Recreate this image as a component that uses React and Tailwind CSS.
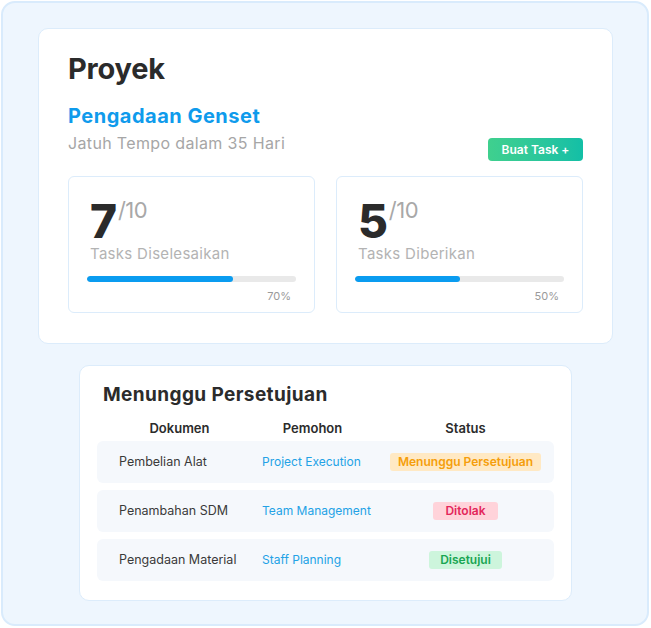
import React from "react"

const stats = [
  { value: 7, total: 10, label: "Tasks Diselesaikan", pct: 70 },
  { value: 5, total: 10, label: "Tasks Diberikan", pct: 50 },
]

const approvals = [
  { doc: "Pembelian Alat", by: "Project Execution", status: "Menunggu Persetujuan", tone: "bg-[#ffe9c4] text-[#f59e0b] px-[8px]" },
  { doc: "Penambahan SDM", by: "Team Management", status: "Ditolak", tone: "bg-[#ffd3da] text-[#e3265a] px-[12px]" },
  { doc: "Pengadaan Material", by: "Staff Planning", status: "Disetujui", tone: "bg-[#cdf5dc] text-[#19a552] px-[11px]" },
]

function StatCard({ value, total, label, pct }) {
  return (
    <div className="flex-1 h-[137px] rounded-md border border-[#dcecfb] bg-white px-[18px] pt-[22px]">
      <div className="flex items-start pl-[3px]">
        <span className="text-[46px] leading-[44px] font-extrabold text-[#2b2b2b] tracking-tight">{value}</span>
        <span className="text-[22px] leading-[22px] text-[#a8a8a8] ml-[2px] tracking-tight">/{total}</span>
      </div>
      <div className="mt-[1px] pl-[3px] text-[15px] leading-[20px] tracking-[0.3px] text-[#b3b3b3]">{label}</div>
      <div className="mt-[12px] h-[6px] w-full rounded-full bg-[#e9e9e9] overflow-hidden">
        <div className="h-full rounded-full bg-[#0a9cf0]" style={{ width: `${pct}%` }} />
      </div>
      <div className="mt-[7px] pr-[5px] text-right text-[11px] leading-[14px] text-[#9a9a9a]">{pct}%</div>
    </div>
  )
}

export default function App() {
  return (
    <div className="w-[651px] h-[628px] bg-white p-[1px] font-['Inter',sans-serif]">
      <div className="w-[648px] h-[625px] rounded-[14px] border-2 border-[#d9ebfc] bg-[#eef6fe] pt-[25px] pl-[35px] pr-[34px]">
        <div className="rounded-[10px] border border-[#dcecfb] bg-white h-[316px] px-[29px] pt-[23px]">
          <h1 className="text-[29px] leading-[34px] font-bold text-[#2b2b2b] tracking-[-0.2px]">Proyek</h1>
          <div className="mt-[18px] text-[20px] leading-[24px] font-bold tracking-[0.5px] text-[#0f9bec]">Pengadaan Genset</div>
          <div className="flex items-start justify-between">
            <div className="mt-[5px] text-[16px] leading-[20px] tracking-[0.35px] text-[#a6a6a6]">Jatuh Tempo dalam 35 Hari</div>
            <button className="mt-[10px] h-[23px] w-[95px] rounded-[4px] bg-gradient-to-r from-[#3fd08e] to-[#12bfa6] text-[12px] font-semibold text-white">
              Buat Task +
            </button>
          </div>
          <div className="mt-[15px] flex gap-[21px]">
            {stats.map((s) => (
              <StatCard key={s.label} {...s} />
            ))}
          </div>
        </div>

        <div className="mx-auto mt-[21px] w-[493px] h-[236px] rounded-[10px] border border-[#dcecfb] bg-white px-[17px] pt-[17px]">
          <h2 className="pl-[6px] text-[19px] leading-[24px] font-bold tracking-[0.4px] text-[#2b2b2b]">Menunggu Persetujuan</h2>
          <div className="mt-[12px] grid grid-cols-[165px_115px_1fr] text-[13px] leading-[18px] font-semibold text-[#2b2b2b]">
            <div className="text-center">Dokumen</div>
            <div className="text-center pr-[14px]">Pemohon</div>
            <div className="text-center">Status</div>
          </div>
          <div className="mt-[4px] flex flex-col gap-[7px]">
            {approvals.map((a) => (
              <div key={a.doc} className="grid h-[42px] grid-cols-[165px_115px_1fr] items-center rounded-md bg-[#f5f8fc] text-[12px]">
                <div className="pl-[22px] text-[12.5px] text-[#3a3a3a] whitespace-nowrap">{a.doc}</div>
                <div className="text-[#23a2e6] whitespace-nowrap">{a.by}</div>
                <div className="flex justify-center">
                  <span className={`rounded-[3px] leading-[18px] text-[12px] font-semibold ${a.tone}`}>{a.status}</span>
                </div>
              </div>
            ))}
          </div>
        </div>
      </div>
    </div>
  )
}
